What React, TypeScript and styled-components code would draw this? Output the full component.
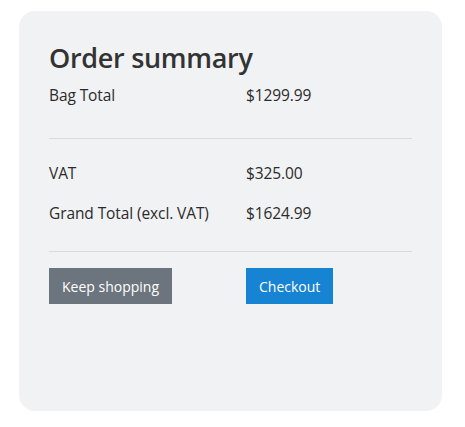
import React from 'react';
import styled, { createGlobalStyle } from 'styled-components';

const GlobalStyle = createGlobalStyle`
  body {
    margin: 0;
    background: #ffffff;
    font-family: 'Open Sans', 'Noto Sans', sans-serif;
    color: #333333;
  }
`;

const Page = styled.div`
  padding: 11px 23px 16px 19px;
`;

const Card = styled.div`
  width: 363px;
  height: 354px;
  padding: 30px 30px 16px 30px;
  background-color: #f1f2f4;
  border-radius: 16px;
`;

const Title = styled.h2`
  margin: 0 0 9px 0;
  font-size: 27px;
  font-weight: 600;
  line-height: 34px;
  color: #333333;
  letter-spacing: -0.3px;
`;

const Rows = styled.div`
  display: grid;
  grid-template-columns: 197px 1fr;
  row-gap: 18px;
`;

const Cell = styled.span`
  font-size: 15.5px;
  line-height: 22px;
  color: #2b2b2b;
  letter-spacing: -0.1px;
`;

const Divider = styled.hr<{ top: number; bottom: number }>`
  margin: ${(p) => `${p.top}px 0 ${p.bottom}px 0`};
  border: none;
  border-top: 1px solid #d9dadd;
`;

const Actions = styled.div`
  display: grid;
  grid-template-columns: 197px 1fr;
  align-items: start;
`;

const Button = styled.button<{ variant: 'secondary' | 'primary' }>`
  justify-self: start;
  height: 36px;
  padding: 0 13px;
  border: none;
  border-radius: 0;
  font-family: inherit;
  font-size: 14px;
  color: #ffffff;
  background-color: ${(p) => (p.variant === 'primary' ? '#1783d3' : '#6c757d')};
  cursor: pointer;
`;

const App: () => JSX.Element = () => (
  <Page>
    <GlobalStyle />
    <Card>
      <Title>Order summary</Title>
      <Rows>
        <Cell>Bag Total</Cell>
        <Cell>$1299.99</Cell>
      </Rows>
      <Divider top={32} bottom={23} />
      <Rows>
        <Cell>VAT</Cell>
        <Cell>$325.00</Cell>
        <Cell>Grand Total (excl. VAT)</Cell>
        <Cell>$1624.99</Cell>
      </Rows>
      <Divider top={27} bottom={16} />
      <Actions>
        <Button variant="secondary">Keep shopping</Button>
        <Button variant="primary">Checkout</Button>
      </Actions>
    </Card>
  </Page>
);

export default App;
